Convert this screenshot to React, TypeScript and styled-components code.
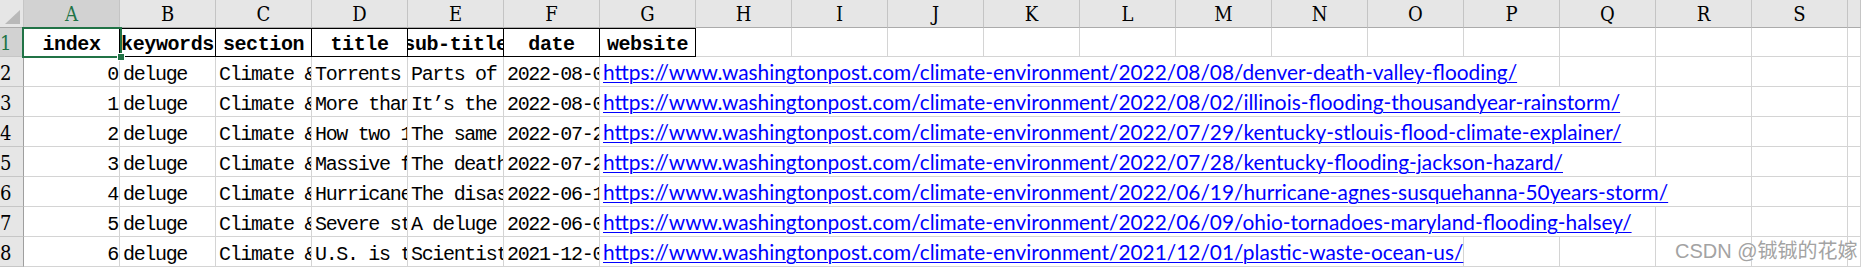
import React from 'react';
import styled, { createGlobalStyle } from 'styled-components';

const GlobalStyle = createGlobalStyle`
  html, body { margin: 0; padding: 0; background: #ffffff; }
  body { width: 1861px; height: 267px; overflow: hidden; }
`;

const COLS = 'ABCDEFGHIJKLMNOPQRS'.split('');
const HEADERS = ['index', 'keywords', 'section', 'title', 'sub-title', 'date', 'website'];
const BASE = 'https://www.washingtonpost.com/climate-environment/';

type Row = {
  idx: number;
  kw: string;
  sec: string;
  title: string;
  sub: string;
  date: string;
  path: string;
  span: number;
};

const ROWS: Row[] = [
  { idx: 0, kw: 'deluge', sec: 'Climate & Environment', title: 'Torrents of rain flood Death Valley and Denver', sub: 'Parts of the West got months of rain in hours', date: '2022-08-08', path: '2022/08/08/denver-death-valley-flooding/', span: 10 },
  { idx: 1, kw: 'deluge', sec: 'Climate & Environment', title: 'More than 9 inches of rain fell in Illinois', sub: 'It’s the latest in a string of extreme rainfalls', date: '2022-08-02', path: '2022/08/02/illinois-flooding-thousandyear-rainstorm/', span: 11 },
  { idx: 2, kw: 'deluge', sec: 'Climate & Environment', title: 'How two 1,000-year rain events hit in one week', sub: 'The same ingredients fueled both floods', date: '2022-07-29', path: '2022/07/29/kentucky-stlouis-flood-climate-explainer/', span: 11 },
  { idx: 3, kw: 'deluge', sec: 'Climate & Environment', title: 'Massive flooding devastates eastern Kentucky', sub: 'The death toll is expected to rise', date: '2022-07-28', path: '2022/07/28/kentucky-flooding-jackson-hazard/', span: 11 },
  { idx: 4, kw: 'deluge', sec: 'Climate & Environment', title: 'Hurricane Agnes, 50 years later', sub: 'The disaster reshaped the Susquehanna valley', date: '2022-06-19', path: '2022/06/19/hurricane-agnes-susquehanna-50years-storm/', span: 12 },
  { idx: 5, kw: 'deluge', sec: 'Climate & Environment', title: 'Severe storms spawn tornadoes in Ohio', sub: 'A deluge of rain flooded parts of Maryland', date: '2022-06-09', path: '2022/06/09/ohio-tornadoes-maryland-flooding-halsey/', span: 11 },
  { idx: 6, kw: 'deluge', sec: 'Climate & Environment', title: 'U.S. is the world’s biggest plastic polluter', sub: 'Scientists say the country generates the most waste', date: '2021-12-01', path: '2021/12/01/plastic-waste-ocean-us/', span: 9 },
];

const GRID = '#d4d4d4';
const HEAD_BG = '#e6e6e6';
const GREEN = '#217346';

const Sheet = styled.div`
  position: relative;
  display: grid;
  grid-template-columns: 24px repeat(19, 96px) 1fr;
  grid-template-rows: 28px 29px repeat(7, 30px);
  width: 1861px;
  height: 267px;
  overflow: hidden;
  background: #ffffff;
  color: #000000;
  font-family: "Liberation Mono", "Courier New", monospace;
`;

const Corner = styled.div`
  position: relative;
  box-sizing: border-box;
  background: ${HEAD_BG};
  border-right: 1px solid #c6c6c6;
  border-bottom: 1px solid #ababab;
  overflow: hidden;
`;

const CornerTriangle = styled.div`
  position: absolute;
  right: 3px;
  bottom: 3px;
  width: 0;
  height: 0;
  border-style: solid;
  border-width: 0 0 14px 15px;
  border-color: transparent transparent #b9b9b9 transparent;
`;

const ColHead = styled.div<{ $active?: boolean }>`
  box-sizing: border-box;
  display: flex;
  justify-content: center;
  align-items: flex-end;
  padding-bottom: 2px;
  background: ${p => (p.$active ? '#d2d2d2' : HEAD_BG)};
  border-right: 1px solid #c4c4c4;
  border-bottom: 1px solid #ababab;
  color: ${p => (p.$active ? GREEN : '#000000')};
  font-family: "DejaVu Serif", "Liberation Serif", serif;
  font-stretch: condensed;
  font-size: 20px;
  line-height: 22px;
  overflow: hidden;
`;

const RowHead = styled.div<{ $active?: boolean }>`
  box-sizing: border-box;
  display: flex;
  align-items: flex-end;
  padding-bottom: 1px;
  background: ${p => (p.$active ? '#d2d2d2' : HEAD_BG)};
  border-right: 1px solid #9f9f9f;
  border-bottom: 1px solid #c6c6c6;
  color: ${p => (p.$active ? GREEN : '#000000')};
  font-family: "DejaVu Serif", "Liberation Serif", serif;
  font-stretch: condensed;
  font-size: 20px;
  line-height: 24px;
  overflow: hidden;
`;

const Cell = styled.div<{ $align?: 'left' | 'right' }>`
  box-sizing: border-box;
  display: flex;
  align-items: flex-end;
  justify-content: ${p => (p.$align === 'right' ? 'flex-end' : 'flex-start')};
  padding: 0 ${p => (p.$align === 'right' ? '1px' : '0')} 0 ${p => (p.$align === 'right' ? '0' : '3px')};
  border-right: 1px solid ${GRID};
  border-bottom: 1px solid ${GRID};
  font-size: 20px;
  letter-spacing: -1.33px;
  line-height: 23px;
  white-space: pre;
  overflow: hidden;
`;

const HeadCell = styled.div`
  box-sizing: border-box;
  display: flex;
  align-items: flex-end;
  justify-content: center;
  border-top: 1px solid #000000;
  border-right: 1px solid #000000;
  border-bottom: 1px solid #000000;
  font-size: 20px;
  font-weight: bold;
  letter-spacing: -0.4px;
  line-height: 23px;
  white-space: pre;
  overflow: hidden;
`;

const LinkCell = styled.div<{ $span: number }>`
  grid-column: span ${p => p.$span};
  box-sizing: border-box;
  display: flex;
  align-items: flex-end;
  padding: 0 0 3px 3px;
  border-right: 1px solid ${GRID};
  border-bottom: 1px solid ${GRID};
  white-space: pre;
  overflow: visible;
`;

const Link = styled.a`
  font-family: Lato, "Liberation Sans", sans-serif;
  font-size: 20.85px;
  line-height: 22px;
  color: #0000ff;
  text-decoration: underline;
  text-decoration-thickness: 1px;
  text-underline-offset: 2px;
`;

const Selection = styled.div`
  position: absolute;
  left: 22px;
  top: 27px;
  width: 100px;
  height: 31px;
  box-sizing: border-box;
  border: 2px solid ${GREEN};
  pointer-events: none;
`;

const Handle = styled.div`
  position: absolute;
  right: -5px;
  bottom: -5px;
  width: 6px;
  height: 6px;
  background: ${GREEN};
  border: 1px solid #ffffff;
`;

const Watermark = styled.div`
  position: absolute;
  left: 1675px;
  top: 238px;
  font-family: "Liberation Sans", "Noto Sans CJK SC", sans-serif;
  font-size: 20px;
  line-height: 24px;
  color: #a3a3a3;
  text-shadow: 0 0 1px #ffffff;
  white-space: nowrap;
  pointer-events: none;
`;

const CJK = styled.span`
  font-family: "Noto Sans CJK SC", sans-serif;
`;

function Blanks({ count, rowKey }: { count: number; rowKey: string }) {
  return (
    <>
      {Array.from({ length: count }, (_, i) => (
        <Cell key={`${rowKey}-b${i}`} />
      ))}
    </>
  );
}

export default function App() {
  return (
    <>
      <GlobalStyle />
      <Sheet>
        <Corner>
          <CornerTriangle />
        </Corner>
        {COLS.map(c => (
          <ColHead key={c} $active={c === 'A'}>{c}</ColHead>
        ))}
        <ColHead />

        <RowHead $active>1</RowHead>
        {HEADERS.map(h => (
          <HeadCell key={h}>{h}</HeadCell>
        ))}
        <Blanks count={13} rowKey="r1" />

        {ROWS.map((r, i) => (
          <React.Fragment key={r.idx}>
            <RowHead>{i + 2}</RowHead>
            <Cell $align="right">{r.idx}</Cell>
            <Cell>{r.kw}</Cell>
            <Cell>{r.sec}</Cell>
            <Cell>{r.title}</Cell>
            <Cell>{r.sub}</Cell>
            <Cell>{r.date}</Cell>
            <LinkCell $span={r.span}>
              <Link href={BASE + r.path}>{BASE + r.path}</Link>
            </LinkCell>
            <Blanks count={14 - r.span} rowKey={`r${i}`} />
          </React.Fragment>
        ))}

        <Selection>
          <Handle />
        </Selection>
        <Watermark>
          CSDN @<CJK>铖铖的花嫁</CJK>
        </Watermark>
      </Sheet>
    </>
  );
}
